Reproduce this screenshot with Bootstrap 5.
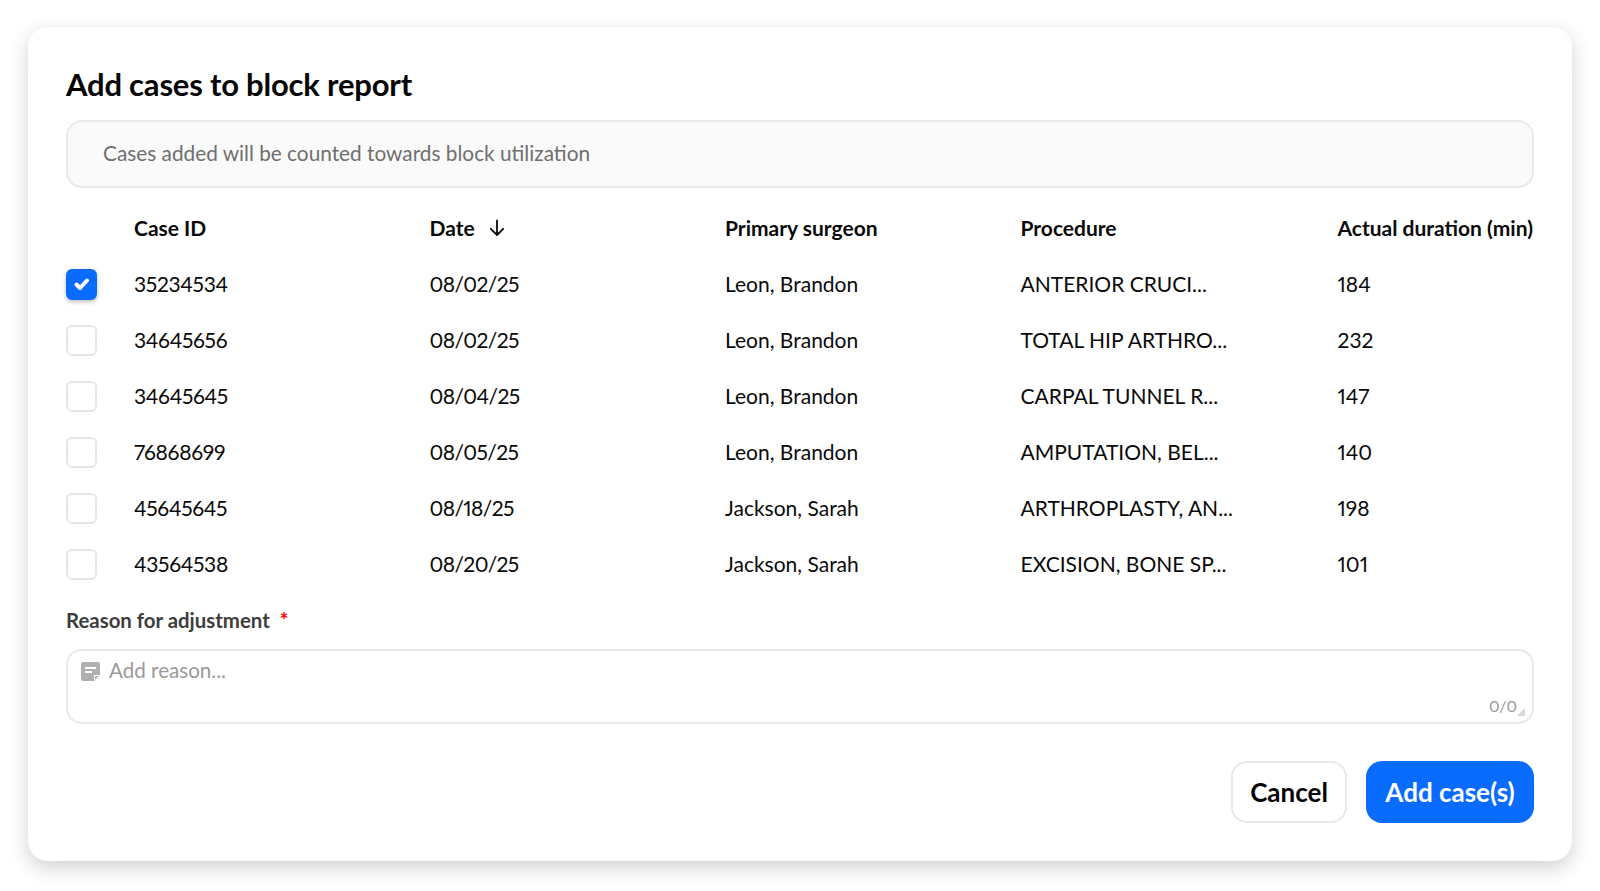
<!DOCTYPE html>
<html lang="en">
<head>
<meta charset="utf-8">
<title>Add cases to block report</title>
<link href="https://cdn.jsdelivr.net/npm/bootstrap@5.3.0/dist/css/bootstrap.min.css" rel="stylesheet">
<style>
html,body{height:891px;overflow:hidden;background:#fff}
body{font-family:"Lato","Liberation Sans",sans-serif;color:#0a0a0a;padding:27px 28px 30px;font-variant-numeric:proportional-nums}
.sheet{height:834px;border-radius:20px;padding:38px;background:#fff;box-shadow:0 7px 20px rgba(0,0,0,.18)}
.sheet-title{font-size:31px;font-weight:700;line-height:38px;margin:0 0 17px;color:#050505;letter-spacing:-.2px}
.note-box{height:68px;border:2px solid #e9e9e9;border-radius:16px;background:#fafafa;padding:0 35px 2px;color:#6f6f6f;font-size:20.8px;display:flex;align-items:center;margin-bottom:12px}
.case-table{table-layout:fixed;width:1468px;margin:0 0 14px;--bs-table-bg:transparent}
.case-table th,.case-table td{padding:0;height:56px;vertical-align:middle;font-size:21px;color:#0a0a0a;font-weight:400;white-space:nowrap;border:0;font-variant-numeric:proportional-nums}
.case-table th{font-weight:700;font-size:21px}
.case-table .num{letter-spacing:-.3px}
.case-table .when{letter-spacing:-.6px}
.c-check{width:68px}.c-id,.c-date,.c-surgeon{width:295.500px}.c-proc{width:317px}
.date-sort{gap:12px}
.box{width:31px;height:31px;border:2px solid #e6e6e6;border-radius:6px;background:#fff;display:block}
.box.on{background:#0a6cff;border-color:#0a6cff;box-shadow:0 2px 4px rgba(0,0,0,.25);display:flex;align-items:center;justify-content:center}
.field-label{font-size:20.4px;font-weight:700;color:#3d3d3d;line-height:28px;margin:0 0 15px;display:block}
.req{color:#f00;margin-left:5px}
.reason{height:75px;border:2px solid #e9e9e9;border-radius:16px;padding:7px 13px;position:relative;color:#9a9a9a;font-size:20.600px;display:flex;align-items:flex-start;gap:9px;line-height:24px}
.counter{position:absolute;right:15px;bottom:6px;font-size:16px;line-height:20px;color:#9a9a9a}
.grip{position:absolute;right:7px;bottom:6px}
.foot{margin-top:37px;gap:19px}
.btn.act{height:62px;border-radius:16px;font-size:26px;font-weight:700;padding:0;display:flex;align-items:center;justify-content:center}
.btn-quiet{width:116px;border:2px solid #e9e9e9;color:#050505;background:#fff}
.btn-fill{width:168px;border:0;background:#0a6cff;color:#fff}
</style>
</head>
<body>
<div class="sheet">
  <h1 class="sheet-title">Add cases to block report</h1>
  <div class="note-box">Cases added will be counted towards block utilization</div>
  <table class="table table-borderless case-table">
    <thead>
      <tr>
        <th class="c-check"></th>
        <th class="c-id">Case ID</th>
        <th class="c-date"><span class="d-inline-flex align-items-center date-sort">Date
          <svg width="20" height="20" viewBox="0 0 20 20" fill="none" stroke="#0a0a0a" stroke-width="1.8" stroke-linecap="round" stroke-linejoin="round"><path d="M10 2.500V17M3.800 10.800 10 17l6.200-6.200"/></svg></span></th>
        <th class="c-surgeon">Primary surgeon</th>
        <th class="c-proc">Procedure</th>
        <th>Actual duration (min)</th>
      </tr>
    </thead>
    <tbody>
      <tr><td><span class="box on"><svg width="18" height="14" viewBox="0 0 18 14" fill="none" stroke="#fff" stroke-width="4" stroke-linecap="round" stroke-linejoin="round"><path d="M3.500 7.500 7 11 14 3.500"/></svg></span></td><td class="num">35234534</td><td class="when">08/02/25</td><td>Leon, Brandon</td><td>ANTERIOR CRUCI...</td><td>184</td></tr>
      <tr><td><span class="box"></span></td><td class="num">34645656</td><td class="when">08/02/25</td><td>Leon, Brandon</td><td>TOTAL HIP ARTHRO...</td><td>232</td></tr>
      <tr><td><span class="box"></span></td><td class="num">34645645</td><td class="when">08/04/25</td><td>Leon, Brandon</td><td>CARPAL TUNNEL R...</td><td>147</td></tr>
      <tr><td><span class="box"></span></td><td class="num">76868699</td><td class="when">08/05/25</td><td>Leon, Brandon</td><td>AMPUTATION, BEL...</td><td>140</td></tr>
      <tr><td><span class="box"></span></td><td class="num">45645645</td><td class="when">08/18/25</td><td>Jackson, Sarah</td><td>ARTHROPLASTY, AN...</td><td>198</td></tr>
      <tr><td><span class="box"></span></td><td class="num">43564538</td><td class="when">08/20/25</td><td>Jackson, Sarah</td><td>EXCISION, BONE SP...</td><td>101</td></tr>
    </tbody>
  </table>
  <label class="field-label">Reason for adjustment <span class="req">*</span></label>
  <div class="reason">
    <svg class="mt-1 flex-shrink-0" width="19" height="19" viewBox="0 0 19 19"><path fill="#b0b0b0" d="M2 0h15a2 2 0 0 1 2 2v11l-6 6H2a2 2 0 0 1-2-2V2a2 2 0 0 1 2-2z"/><path fill="#fff" d="M4 5h11v2H4zM4 9h7v2H4zM13 18v-5h5.500l-1 1H14v3.500z"/></svg>
    <span>Add reason...</span>
    <span class="counter">0/0</span>
    <svg class="grip" width="8" height="8" viewBox="0 0 8 8"><path fill="#d8d8d8" d="M8 0v8H0z"/></svg>
  </div>
  <div class="d-flex justify-content-end foot">
    <button type="button" class="btn act btn-quiet">Cancel</button>
    <button type="button" class="btn act btn-fill">Add case(s)</button>
  </div>
</div>
<script src="https://cdn.jsdelivr.net/npm/bootstrap@5.3.0/dist/js/bootstrap.bundle.min.js"></script>
</body>
</html>
